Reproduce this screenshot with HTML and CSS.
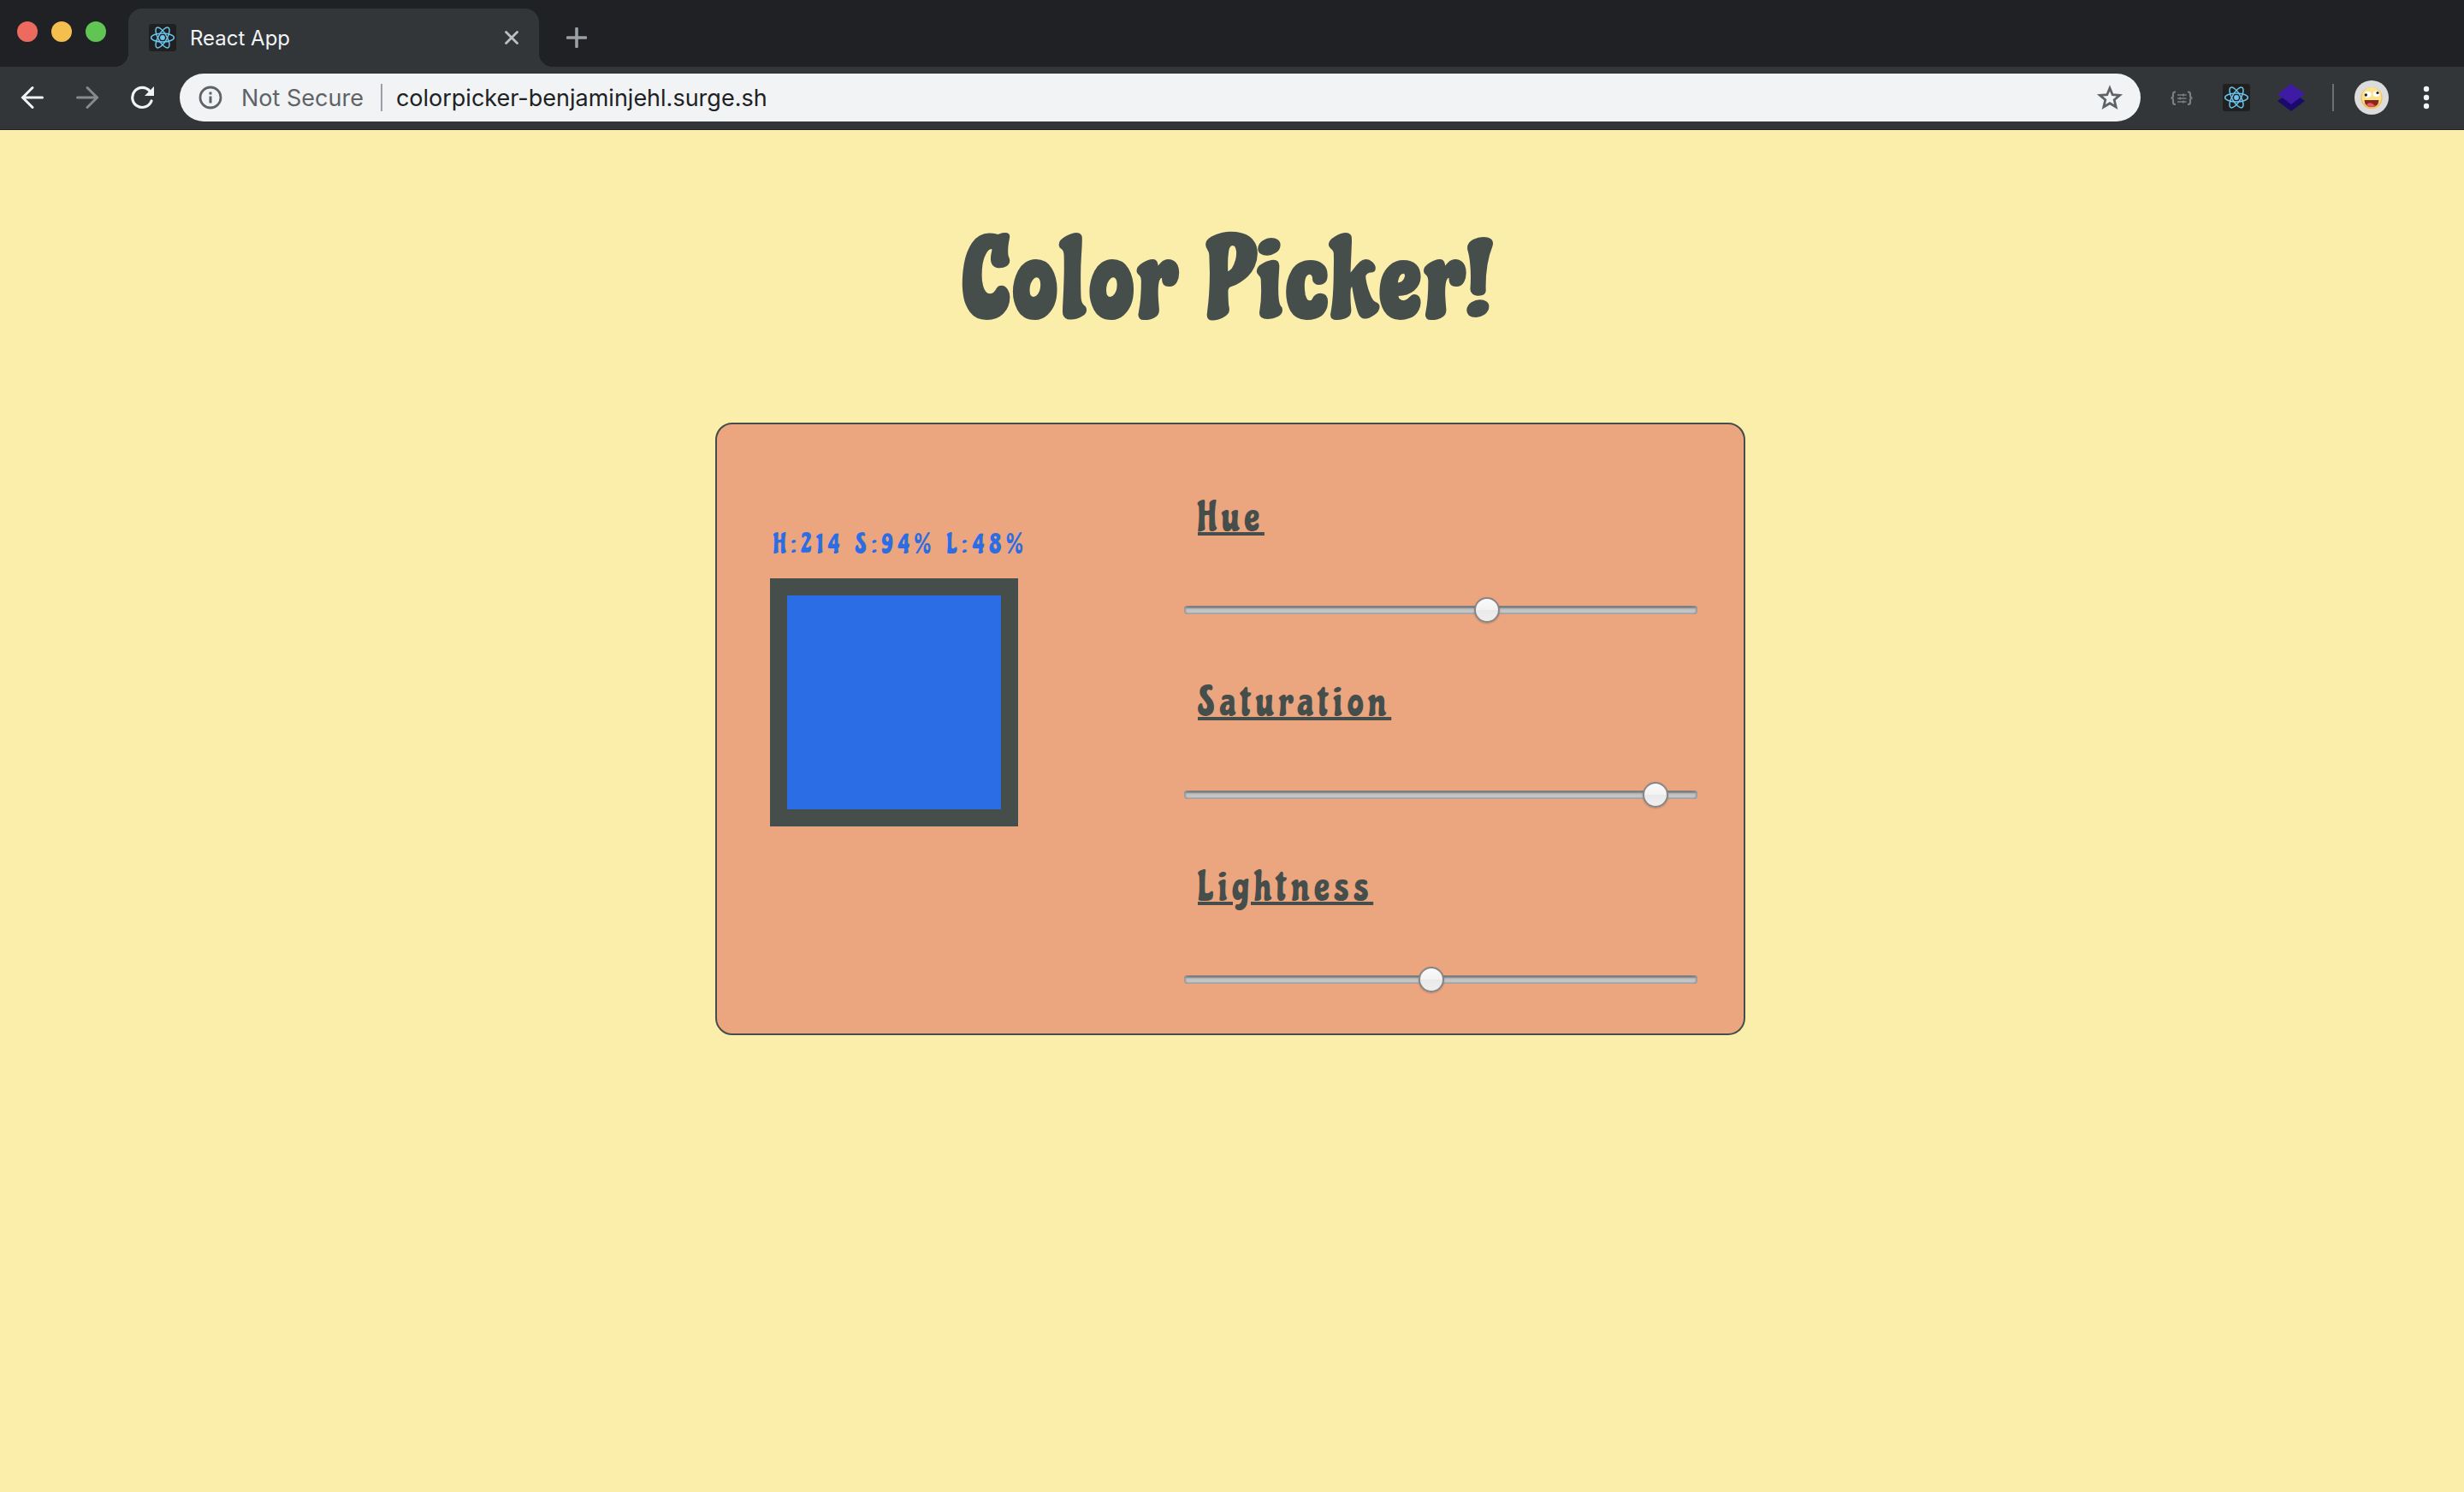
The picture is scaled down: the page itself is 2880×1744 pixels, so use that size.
FILE: index.html
```html
<!DOCTYPE html>
<html lang="en">
<head>
<meta charset="utf-8">
<title>React App</title>
<link rel="stylesheet" href="styles.css">
</head>
<body>
<svg class="defs" aria-hidden="true">
  <symbol id="react" viewBox="0 0 32 32">
    <rect width="32" height="32" rx="3" fill="#202020"/>
    <g fill="none" stroke="#6cc5ee" stroke-width="1.5">
      <ellipse cx="16" cy="16" rx="13.4" ry="5"/>
      <ellipse cx="16" cy="16" rx="13.4" ry="5" transform="rotate(60 16 16)"/>
      <ellipse cx="16" cy="16" rx="13.4" ry="5" transform="rotate(120 16 16)"/>
    </g>
    <circle cx="16" cy="16" r="2.9" fill="#6cc5ee"/>
  </symbol>
</svg>
<header class="browser">
  <div class="tabstrip">
    <div class="lights"><span class="light red"></span><span class="light amber"></span><span class="light green"></span></div>
    <div class="tab">
      <svg class="icon32"><use href="#react"/></svg>
      <span class="tab-title">React App</span>
      <button class="bare" aria-label="Close tab"><svg class="icon16" viewBox="0 0 16 16"><path d="M1.500 1.500 14.500 14.500M14.500 1.500 1.500 14.500" stroke="#bdc1c4" stroke-width="2.8" stroke-linecap="round"/></svg></button>
    </div>
    <button class="bare new-tab" aria-label="New tab"><svg class="icon24" viewBox="0 0 24 24"><path d="M12 1.500V22.500M1.500 12H22.500" stroke="#9aa0a3" stroke-width="3.6" stroke-linecap="round"/></svg></button>
  </div>
  <div class="toolbar">
    <nav class="nav">
      <button class="bare" aria-label="Back"><svg class="icon28" viewBox="0 0 28 28"><path d="M25.500 14H3M14 2.500 2.500 14 14 25.500" fill="none" stroke="#f1f3f4" stroke-width="3" stroke-linecap="round"/></svg></button>
      <button class="bare" aria-label="Forward"><svg class="icon28" viewBox="0 0 28 28"><path d="M2.500 14H25M14 2.500 25.500 14 14 25.500" fill="none" stroke="#868a8c" stroke-width="3" stroke-linecap="round"/></svg></button>
      <button class="bare" aria-label="Reload"><svg class="icon28" viewBox="0 0 28 28"><path d="M23 6.500A11.500 11.500 0 1 0 25 18" fill="none" stroke="#f1f3f4" stroke-width="3.2" stroke-linecap="round"/><path d="M28 1V12H17Z" fill="#f1f3f4"/></svg></button>
    </nav>
    <div class="omnibox">
      <svg class="icon28" viewBox="0 0 28 28"><circle cx="14" cy="14" r="12" fill="none" stroke="#5f6368" stroke-width="2.8"/><path d="M14 12.500V20.500M14 7.500V10.400" stroke="#5f6368" stroke-width="3"/></svg>
      <span class="security">Not Secure</span>
      <span class="bar"></span>
      <input class="url" type="text" aria-label="Address" value="colorpicker-benjaminjehl.surge.sh">
      <button class="bare" aria-label="Bookmark"><svg class="icon32" viewBox="0 0 32 32"><path d="M16 5 19.2 12.7 27.6 13.4 21.2 18.8 23.2 27 16 22.7 8.8 27 10.8 18.8 4.4 13.4 12.8 12.7Z" fill="none" stroke="#5f6368" stroke-width="2.8"/></svg></button>
    </div>
    <div class="extensions">
      <button class="bare" aria-label="JSON viewer"><svg class="icon32" viewBox="0 0 32 32"><g fill="none" stroke="#7c7f81" stroke-width="2.2"><path d="M9 9.500H8Q6 9.500 6 12V14Q6 16.500 3.500 16.500Q6 16.500 6 19V21.500Q6 24 8 24H9M23 9.500H24Q26 9.500 26 12V14Q26 16.500 28.500 16.500Q26 16.500 26 19V21.500Q26 24 24 24H23"/><path d="M11 13H21.500M11 17H21.500M11 21H21.500" stroke-width="1.300"/><path d="M18 11.500V14.500M14 15.500V18.500M18 19.500V22.500" stroke-width="1.600"/></g></svg></button>
      <button class="bare" aria-label="React tools"><svg class="icon32"><use href="#react"/></svg></button>
      <button class="bare" aria-label="Layers"><svg class="icon32" viewBox="0 0 32 32"><path d="M0 20 16 9 32 20 16 32Z" fill="#190a6b"/><path d="M0 12 16 0 32 12 16 24Z" fill="#3d1ba5"/></svg></button>
      <span class="bar dim"></span>
      <button class="bare" aria-label="Profile"><svg class="icon40" viewBox="0 0 40 40"><circle cx="20" cy="20" r="20" fill="#dcdcdc"/><circle cx="20" cy="20.500" r="12.600" fill="#f3bd55"/><circle cx="20" cy="19.500" r="11.400" fill="#fbe28c"/><ellipse cx="15.500" cy="16.500" rx="4.200" ry="3.400" fill="#fff"/><ellipse cx="25.500" cy="15.800" rx="3.900" ry="3.200" fill="#fff"/><circle cx="13.300" cy="17" r="1.700" fill="#222"/><circle cx="27" cy="14.500" r="1.600" fill="#222"/><path d="M11.500 23H28.500Q28 31 20 31Q12 31 11.500 23Z" fill="#86281c"/><path d="M14 28.500Q18 23.500 24 29.500Q19 32.500 14 28.500Z" fill="#e8596b"/></svg></button>
      <button class="bare" aria-label="Menu"><svg class="icon32" viewBox="0 0 32 32"><g fill="#f1f3f4"><circle cx="16" cy="6" r="3.200"/><circle cx="16" cy="16" r="3.200"/><circle cx="16" cy="26" r="3.200"/></g></svg></button>
    </div>
  </div>
</header>
<main class="page">
  <h1 class="title">Color Picker!</h1>
  <section class="card">
    <div class="preview">
      <output class="readout" for="hue saturation lightness">H:214 S:94% L:48%</output>
      <div class="swatch"></div>
    </div>
    <div class="controls">
      <div class="field"><label class="label" for="hue">Hue</label><input class="slider" id="hue" type="range" min="0" max="360" value="214"></div>
      <div class="field"><label class="label" for="saturation">Saturation</label><input class="slider" id="saturation" type="range" min="0" max="100" value="94"></div>
      <div class="field"><label class="label" for="lightness">Lightness</label><input class="slider" id="lightness" type="range" min="0" max="100" value="48"></div>
    </div>
  </section>
</main>
</body>
</html>
```
FILE: styles.css
```css
* { box-sizing: border-box; }

body {
  margin: 0;
  min-height: 100vh;
  background: #faeeaa;
  color: #454e4b;
  font-family: Inter, "Liberation Sans", sans-serif;
}

svg { display: block; flex: none; }
.defs { position: absolute; width: 0; height: 0; }
.icon16 { width: 16px; height: 16px; }
.icon24 { width: 24px; height: 24px; }
.icon28 { width: 28px; height: 28px; }
.icon32 { width: 32px; height: 32px; }
.icon40 { width: 40px; height: 40px; }

.bare {
  flex: none;
  padding: 0;
  border: 0;
  background: none;
}

/* Browser window */
.browser { background: #323639; }

.tabstrip {
  display: flex;
  align-items: center;
  height: 78px;
  padding: 10px 20px 0;
  background: #202124;
}

.lights {
  display: flex;
  gap: 16px;
  width: 130px;
  height: 44px;
  padding-top: 3px;
}

.light {
  width: 24px;
  height: 24px;
  border-radius: 50%;
}

.red { background: #ed6a5e; }
.amber { background: #f5bf4f; }
.green { background: #61c554; }

.tab {
  position: relative;
  display: flex;
  align-items: center;
  gap: 16px;
  width: 480px;
  height: 68px;
  padding: 0 24px;
  border-radius: 16px 16px 0 0;
  background: #323639;
}

.tab::before,
.tab::after {
  content: "";
  position: absolute;
  bottom: 0;
  width: 16px;
  height: 16px;
}

.tab::before {
  left: -16px;
  background: radial-gradient(circle at 0 0, #202124 16px, #323639 16px);
}

.tab::after {
  right: -16px;
  background: radial-gradient(circle at 100% 0, #202124 16px, #323639 16px);
}

.tab-title {
  flex: 1;
  color: #f1f3f4;
  font-size: 24px;
}

.new-tab { margin-left: 32px; }

.toolbar {
  display: flex;
  align-items: center;
  height: 74px;
  padding: 0 24px 1px;
  border-bottom: 1px solid #202124;
}

.nav {
  display: flex;
  gap: 36px;
  margin-right: 30px;
}

.omnibox {
  display: flex;
  flex: 1;
  align-items: center;
  height: 56px;
  padding: 0 20px 0 22px;
  border-radius: 28px;
  background: #f1f3f4;
}

.security {
  margin: 0 20px 0 22px;
  color: #5f6368;
  font-size: 27px;
}

.bar {
  width: 2px;
  height: 32px;
  background: #9aa0a6;
}

.url {
  flex: 1;
  min-width: 0;
  padding: 0 16px;
  border: 0;
  background: none;
  color: #202124;
  font-family: inherit;
  font-size: 27px;
}

.extensions {
  display: flex;
  align-items: center;
  gap: 32px;
  margin-left: 32px;
}

.dim { background: #6d7072; }
.extensions .dim { margin-right: -8px; }
.extensions .bare:last-child { margin: 0 4px 0 -4px; }

/* Colour picker */
.page {
  padding-right: 4px;
  font-family: Chicle, "Liberation Sans Narrow", "Liberation Sans", sans-serif;
  letter-spacing: 6px;
}

.title {
  margin: 0;
  padding: 98px 0 84px;
  font-size: 128px;
  line-height: 160px;
  text-align: center;
}

.card {
  display: grid;
  grid-template-columns: 1fr 600px;
  align-items: start;
  width: 90%;
  max-width: 1204px;
  margin: 0 auto;
  padding: 64px 54px 48px 62px;
  border: 2px solid #454e4b;
  border-radius: 20px;
  background: #eba57f;
}

.preview { padding-top: 56px; }

.readout {
  display: block;
  padding-left: 4px;
  color: #2b6de5;
  font-size: 32px;
  line-height: 40px;
}

.swatch {
  width: 290px;
  height: 290px;
  margin-top: 20px;
  border: 20px solid #454e4b;
  background: #2b6de5;
}

.controls {
  display: grid;
  gap: 48px;
}

.field { display: grid; }

.label {
  justify-self: start;
  margin-left: 16px;
  font-size: 48px;
  line-height: 90px;
  text-decoration: underline;
  text-decoration-thickness: 4px;
}

.slider {
  width: 100%;
  height: 30px;
  margin: 48px 0 0;
  appearance: none;
  background: none;
}

.slider::-webkit-slider-runnable-track {
  height: 10px;
  border-radius: 4px;
  background: linear-gradient(#777 0 2px, #aaa 3px, #c4c4c4 5px, #c4c4c4 8px, #adadad 8px);
  box-shadow: inset 2px 0 2px #999, inset -2px 0 2px #999;
}

.slider::-webkit-slider-thumb {
  width: 30px;
  height: 30px;
  margin-top: -10px;
  appearance: none;
  border: 2px solid #868686;
  border-radius: 50%;
  background: linear-gradient(#fafafa, #f2f2f2 50%, #e9e9e9 50%, #eee);
  box-shadow: 0 1px 2px rgb(0 0 0 / 20%);
}
```
